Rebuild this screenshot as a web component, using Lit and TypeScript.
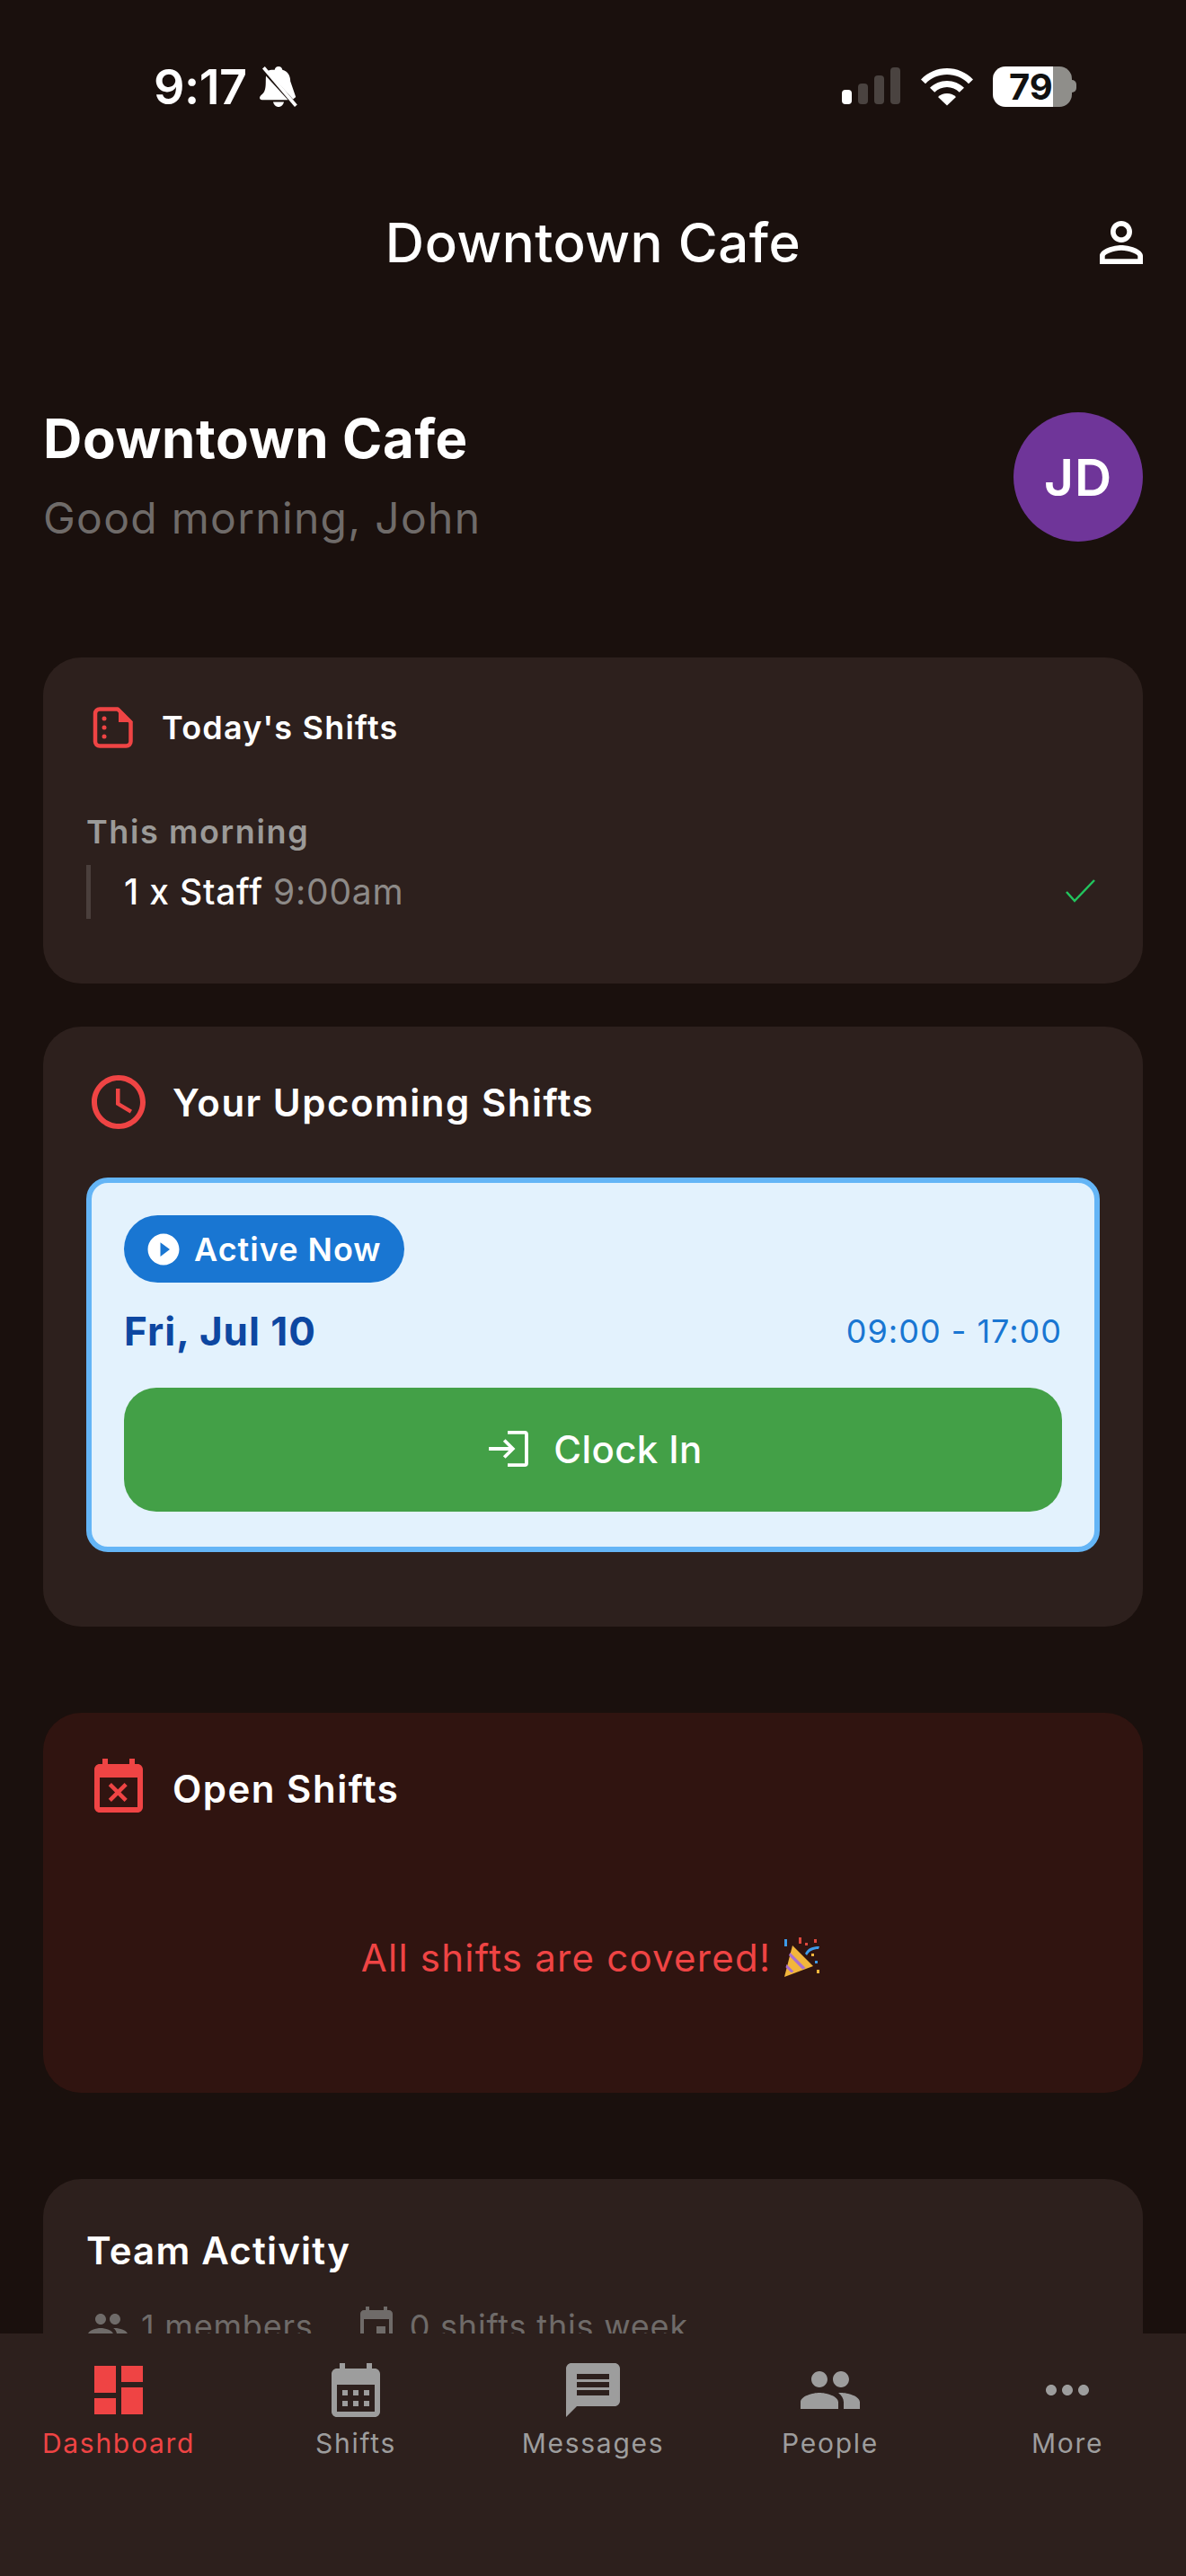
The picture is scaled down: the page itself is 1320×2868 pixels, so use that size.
import { LitElement, html, css } from "lit";
import { customElement } from "lit/decorators.js";

const P = {
  person: "M12 5.9c1.16 0 2.1.94 2.1 2.1s-.94 2.1-2.1 2.1S9.9 9.16 9.9 8s.94-2.1 2.1-2.1m0 9c2.97 0 6.1 1.46 6.1 2.1v1.1H5.9V17c0-.64 3.13-2.1 6.1-2.1M12 4C9.79 4 8 5.79 8 8s1.79 4 4 4 4-1.79 4-4-1.79-4-4-4zm0 9c-2.67 0-8 1.34-8 4v3h16v-3c0-2.66-5.33-4-8-4z",
  clock: "M11.99 2C6.47 2 2 6.48 2 12s4.47 10 9.99 10C17.52 22 22 17.52 22 12S17.52 2 11.99 2zM12 20c-4.42 0-8-3.58-8-8s3.58-8 8-8 8 3.58 8 8-3.58 8-8 8zm.5-13H11v6l5.25 3.15.75-1.23-4.5-2.67z",
  play: "M12 2C6.48 2 2 6.48 2 12s4.48 10 10 10 10-4.48 10-10S17.52 2 12 2zm-2 14.5v-9l6 4.5-6 4.5z",
  busy: "M9.31 17l2.44-2.44L14.19 17l1.06-1.06-2.44-2.44 2.44-2.44L14.19 10l-2.44 2.44L9.31 10l-1.06 1.06 2.44 2.44-2.44 2.44L9.31 17zM19 3h-1V1h-2v2H8V1H6v2H5c-1.11 0-1.99.9-1.99 2L3 19c0 1.1.89 2 2 2h14c1.1 0 2-.9 2-2V5c0-1.1-.9-2-2-2zm0 16H5V8h14v11z",
  people: "M16 11c1.66 0 2.99-1.34 2.99-3S17.66 5 16 5c-1.66 0-3 1.34-3 3s1.34 3 3 3zm-8 0c1.66 0 2.99-1.34 2.99-3S9.66 5 8 5C6.34 5 5 6.34 5 8s1.34 3 3 3zm0 2c-2.33 0-7 1.17-7 3.5V19h14v-2.5c0-2.33-4.67-3.5-7-3.5zm8 0c-.29 0-.62.02-.97.05 1.16.84 1.97 1.97 1.97 3.45V19h6v-2.5c0-2.33-4.67-3.5-7-3.5z",
  event: "M17 12h-5v5h5v-5zM16 1v2H8V1H6v2H5c-1.11 0-1.99.9-1.99 2L3 19c0 1.1.89 2 2 2h14c1.1 0 2-.9 2-2V5c0-1.1-.9-2-2-2h-1V1h-2zm3 18H5V8h14v11z",
  dashboard: "M3 13h8V3H3v10zm0 8h8v-6H3v6zm10 0h8V11h-8v10zm0-18v6h8V3h-8z",
  calendar: "M19 4h-1V2h-2v2H8V2H6v2H5c-1.1 0-2 .9-2 2v14c0 1.1.9 2 2 2h14c1.1 0 2-.9 2-2V6c0-1.1-.9-2-2-2zm0 16H5V10h14v10zM9 14H7v-2h2v2zm4 0h-2v-2h2v2zm4 0h-2v-2h2v2zm-8 4H7v-2h2v2zm4 0h-2v-2h2v2zm4 0h-2v-2h2v2z",
  message: "M20 2H4c-1.1 0-1.99.9-1.99 2L2 22l4-4h14c1.1 0 2-.9 2-2V4c0-1.1-.9-2-2-2zm-2 12H6v-2h12v2zm0-3H6V9h12v2zm0-3H6V6h12v2z",
  more: "M6 10c-1.1 0-2 .9-2 2s.9 2 2 2 2-.9 2-2-.9-2-2-2zm12 0c-1.1 0-2 .9-2 2s.9 2 2 2 2-.9 2-2-.9-2-2-2zm-6 0c-1.1 0-2 .9-2 2s.9 2 2 2 2-.9 2-2-.9-2-2-2z",
};

const icon = (d: string, cls: string) =>
  html`<svg class="icon ${cls}" viewBox="0 0 24 24" fill="currentColor"><path d=${d}></path></svg>`;

const NAV = [
  { label: "Dashboard", d: P.dashboard, active: true },
  { label: "Shifts", d: P.calendar, active: false },
  { label: "Messages", d: P.message, active: false },
  { label: "People", d: P.people, active: false },
  { label: "More", d: P.more, active: false },
];

@customElement("app-root")
export class AppRoot extends LitElement {
  static styles = css`
    :host {
      display: block;
      width: 1320px;
      height: 2868px;
      position: relative;
      overflow: hidden;
      background: #1a100d;
      color: #fff;
      font-family: Inter, "Noto Sans", sans-serif;
    }
    .icon { display: block; flex: none; }
    .i72 { width: 72px; height: 72px; }
    .i60 { width: 60px; height: 60px; }
    .i48 { width: 48px; height: 48px; }
    .i42 { width: 42px; height: 42px; }
    .red { color: #ef4444; }

    .status {
      height: 162px;
      box-sizing: border-box;
      padding: 74px 122px 0 171px;
      display: flex;
      align-items: flex-start;
      justify-content: space-between;
    }
    .status-left { display: flex; align-items: center; gap: 14px; height: 46px; }
    .clock-time { font-size: 54px; font-weight: 600; line-height: 46px; letter-spacing: -0.5px; }
    .status-right { display: flex; align-items: flex-start; }
    .signal { width: 65px; height: 44px; margin-top: 1px; }
    .wifi { width: 58px; height: 42px; margin: 2px 0 0 23px; }
    .battery {
      margin-left: 22px;
      width: 88px;
      height: 45px;
      border-radius: 14px;
      background: linear-gradient(90deg, #fff 0 67px, #8f8e8a 67px);
      color: #111;
      font-size: 40px;
      font-weight: 700;
      line-height: 45px;
      padding-left: 18px;
      box-sizing: border-box;
    }
    .nub { width: 5px; height: 14px; margin-top: 15px; background: #8f8e8a; border-radius: 0 5px 5px 0; }

    .appbar {
      height: 216px;
      position: relative;
      display: flex;
      align-items: center;
      justify-content: center;
    }
    .appbar-title { font-size: 60px; font-weight: 500; letter-spacing: 0.5px; }
    .appbar-action { position: absolute; right: 36px; top: 72px; }

    main { padding: 81px 48px 0; display: flex; flex-direction: column; }
    .greeting { display: flex; justify-content: space-between; align-items: center; height: 144px; margin-bottom: 129px; }
    .greeting-text { padding-bottom: 3px; }
    .hello { font-size: 60px; font-weight: 700; line-height: 72px; letter-spacing: 0.6px; }
    .sub { font-size: 48px; line-height: 60px; margin-top: 23px; color: #6f6b69; letter-spacing: 1.3px; }
    .avatar {
      width: 144px;
      height: 144px;
      border-radius: 50%;
      background: #6f3599;
      display: flex;
      align-items: center;
      justify-content: center;
      font-size: 57px;
      font-weight: 600;
      letter-spacing: 1px;
    }

    .card { background: #2d201d; border-radius: 42px; padding: 48px; }
    .card + .card { margin-top: 48px; }
    .card.far { margin-top: 96px; }
    .card.tinted { background: #301410; height: 423px; box-sizing: border-box; }
    .card-head { display: flex; align-items: center; gap: 24px; }
    .card-title { font-size: 42px; font-weight: 600; letter-spacing: 1.5px; }
    .card-title.small { font-size: 36px; letter-spacing: 1.2px; }

    .today { height: 363px; box-sizing: border-box; }
    .period { font-size: 36px; font-weight: 600; color: #9b9a98; line-height: 44px; margin-top: 64px; letter-spacing: 1.6px; }
    .row {
      margin-top: 15px;
      height: 60px;
      border-left: 5px solid #4a3f3c;
      padding: 0 0 2px 37px;
      box-sizing: border-box;
      display: flex;
      align-items: center;
      justify-content: space-between;
      font-size: 39px;
      font-weight: 500;
      letter-spacing: 0.8px;
    }
    .row span span { color: #8d8a88; font-weight: 400; }
    .check { width: 36px; height: 28px; margin-right: 3px; }

    .upcoming { height: 668px; box-sizing: border-box; }
    .shift {
      margin-top: 48px;
      border: 6px solid #64b5f6;
      background: #e3f2fd;
      border-radius: 24px;
      padding: 36px;
      height: 417px;
      box-sizing: border-box;
      color: #0d47a1;
    }
    .badge {
      display: inline-flex;
      align-items: center;
      gap: 13px;
      height: 75px;
      padding: 0 25px 0 23px;
      border-radius: 38px;
      background: #1976d2;
      color: #fff;
      font-size: 36px;
      font-weight: 600;
      letter-spacing: 1px;
      box-sizing: border-box;
    }
    .shift-row { display: flex; justify-content: space-between; align-items: center; height: 60px; margin-top: 24px; }
    .date { font-size: 44px; font-weight: 700; letter-spacing: 1px; }
    .hours { font-size: 36px; color: #1976d2; letter-spacing: 1px; }
    .clockin {
      margin-top: 33px;
      height: 138px;
      border-radius: 36px;
      background: #43a047;
      color: #fff;
      display: flex;
      align-items: center;
      justify-content: center;
      gap: 28px;
      padding: 0 0 2px 6px;
      box-sizing: border-box;
      font-size: 42px;
      font-weight: 500;
      letter-spacing: 0.4px;
    }
    .login { width: 44px; height: 40px; }

    .covered {
      margin-top: 122px;
      padding-right: 4px;
      display: flex;
      justify-content: center;
      align-items: center;
      gap: 12px;
      color: #ef4444;
      font-size: 42px;
      letter-spacing: 1.25px;
      height: 60px;
    }
    .popper { width: 44px; height: 44px; }

    .team-title { font-size: 42px; font-weight: 600; line-height: 60px; letter-spacing: 1.2px; margin-top: 2px; }
    .stats { display: flex; gap: 46px; color: #6f6b69; font-size: 36px; margin-top: 30px; letter-spacing: 0.8px; }
    .stat { display: flex; align-items: center; gap: 13px; }

    nav {
      position: absolute;
      left: 0;
      right: 0;
      bottom: 0;
      height: 270px;
      background: #2d201d;
      display: grid;
      grid-template-columns: repeat(5, 1fr);
      padding-top: 27px;
      box-sizing: border-box;
    }
    .tab { display: flex; flex-direction: column; align-items: center; color: #9d9d9d; }
    .tab.active { color: #ef4444; }
    .tab-label { font-size: 30px; line-height: 40px; letter-spacing: 1.7px; margin-top: 3px; }
  `;

  render() {
    return html`
      <div class="status">
        <div class="status-left">
          <span class="clock-time">9:17</span>
          <svg class="icon" width="42" height="46" viewBox="0 0 42 46" fill="#fff">
            <path d="M21 0c2.4 0 4 1.7 4.3 3.8 6 1.6 8.7 6.3 8.9 12.6l6 17.6-3 2.4L8.6 5.4C10.800 3.600 13.400 3.800 16.700 3.800 17 1.700 18.600 0 21 0z"></path>
            <path d="M7 10.500l24.500 26.700H2.700C1 37.200 0 36.200 0 34.800c0-2 2.600-3.300 4.500-5.800C7.500 25 6.500 17 7 10.500z"></path>
            <path d="M15 39.500h12c-.8 3.300-3.200 5.500-6 5.500s-5.200-2.200-6-5.500z"></path>
            <path d="M3 2.500l2.800-2.500L41.800 42.500l-2.800 2.500z"></path>
          </svg>
        </div>
        <div class="status-right">
          <svg class="signal" viewBox="0 0 65 44">
            <rect x="0" y="25" width="11" height="16" rx="4" fill="#fff"></rect>
            <rect x="18" y="18" width="11" height="23" rx="4" fill="#4a4340"></rect>
            <rect x="36" y="9" width="11" height="32" rx="4" fill="#4a4340"></rect>
            <rect x="54" y="0" width="11" height="41" rx="4" fill="#4a4340"></rect>
          </svg>
          <svg class="wifi" viewBox="0 0 58 42" fill="#fff">
            <path d="M29 0C18 0 8 4.300 0 12.500l5 4.700C11.500 10.500 20 7 29 7s17.500 3.500 24 10.200l5-4.700C50 4.300 40 0 29 0z"></path>
            <path d="M29 14c-7.300 0-14 2.900-19 7.800l5.200 4.900c3.700-3.500 8.700-5.700 13.800-5.700s10.100 2.200 13.800 5.700l5.200-4.900C43 16.900 36.300 14 29 14z"></path>
            <path d="M29 28c-3.900 0-7.500 1.500-10 4l10 9.500 10-9.500c-2.500-2.500-6.100-4-10-4z"></path>
          </svg>
          <div class="battery">79</div>
          <div class="nub"></div>
        </div>
      </div>

      <div class="appbar">
        <span class="appbar-title">Downtown Cafe</span>
        <span class="appbar-action">${icon(P.person, "i72")}</span>
      </div>

      <main>
        <div class="greeting">
          <div class="greeting-text">
            <div class="hello">Downtown Cafe</div>
            <div class="sub">Good morning, John</div>
          </div>
          <div class="avatar">JD</div>
        </div>

        <section class="card today">
          <div class="card-head">
            <svg class="icon i60 red" viewBox="0 0 60 60" fill="none">
              <path d="M15 9.500h20L49.500 24v21.500a5 5 0 0 1-5 5h-29.500a5 5 0 0 1-5-5v-31a5 5 0 0 1 5-5z" stroke="currentColor" stroke-width="4.500" stroke-linejoin="round"></path>
              <path d="M36 8l16 16H36z" fill="currentColor"></path>
              <circle cx="20" cy="20" r="2.500" fill="currentColor"></circle>
              <circle cx="20" cy="30" r="2.500" fill="currentColor"></circle>
              <circle cx="20" cy="40" r="2.500" fill="currentColor"></circle>
            </svg>
            <span class="card-title small">Today's Shifts</span>
          </div>
          <div class="period">This morning</div>
          <div class="row">
            <span>1 x Staff <span>9:00am</span></span>
            <svg class="check" viewBox="0 0 36 28" fill="none" stroke="#22c55e" stroke-width="2.500"><path d="M2 15l9 10L33 2"></path></svg>
          </div>
        </section>

        <section class="card upcoming">
          <div class="card-head">
            ${icon(P.clock, "i72 red")}
            <span class="card-title">Your Upcoming Shifts</span>
          </div>
          <div class="shift">
            <div class="badge">${icon(P.play, "i42")}Active Now</div>
            <div class="shift-row">
              <span class="date">Fri, Jul 10</span>
              <span class="hours">09:00 - 17:00</span>
            </div>
            <div class="clockin">
              <svg class="icon login" viewBox="0 0 46 42" fill="none" stroke="#fff" stroke-width="4">
                <path d="M22 2h20a2 2 0 0 1 2 2v34a2 2 0 0 1-2 2H22"></path>
                <path d="M0 21h28M18 11l10 10-10 10"></path>
              </svg>
              Clock In
            </div>
          </div>
        </section>

        <section class="card far tinted">
          <div class="card-head">
            ${icon(P.busy, "i72 red")}
            <span class="card-title">Open Shifts</span>
          </div>
          <div class="covered">
            <span>All shifts are covered!</span>
            <svg class="icon popper" viewBox="0 0 44 44">
              <path d="M12 9L35 32 3 44z" fill="#f2b63c"></path>
              <path d="M9.500 17l17 17-3.500 1.500L8 20zM5.500 30l8 8-3 1.200-6-6z" fill="#a86fd0"></path>
              <path d="M26 18c3-6 8-8 16-8l-1 3c-6 0-10 2-13 7z" fill="#3d9be9"></path>
              <g fill="#e0483e"><rect x="19" y="0" width="3" height="7"></rect><rect x="26" y="6" width="3" height="3"></rect><rect x="36" y="2" width="3" height="4"></rect></g>
              <g fill="#3d9be9"><rect x="3" y="2" width="3" height="8"></rect><rect x="37" y="26" width="3" height="3"></rect></g>
              <g fill="#f2b63c"><rect x="33" y="18" width="3" height="3"></rect><rect x="39" y="36" width="3" height="4"></rect></g>
            </svg>
          </div>
        </section>

        <section class="card far">
          <div class="team-title">Team Activity</div>
          <div class="stats">
            <span class="stat">${icon(P.people, "i48")}1 members</span>
            <span class="stat">${icon(P.event, "i48")}0 shifts this week</span>
          </div>
        </section>
      </main>

      <nav>
        ${NAV.map(
          (t) => html`<div class="tab ${t.active ? "active" : ""}">
            ${icon(t.d, "i72")}
            <span class="tab-label">${t.label}</span>
          </div>`
        )}
      </nav>
    `;
  }
}
